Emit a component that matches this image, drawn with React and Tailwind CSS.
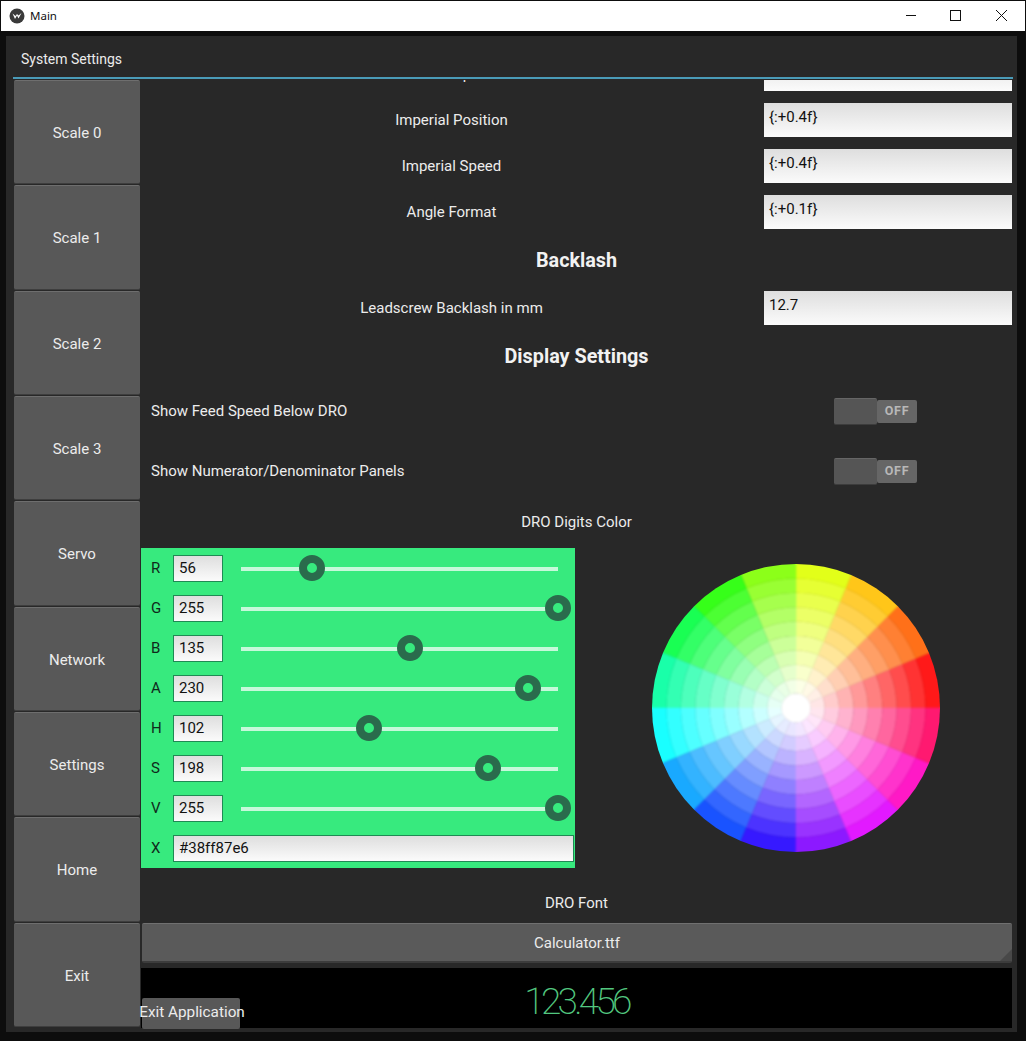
import React from "react";

const roboto = { fontFamily: "Roboto, sans-serif" };
const nav = ["Scale 0", "Scale 1", "Scale 2", "Scale 3", "Servo", "Network", "Settings", "Home", "Exit"];
const sliders = [["R", 56], ["G", 255], ["B", 135], ["A", 230], ["H", 102], ["S", 198], ["V", 255]];

function hsv(h, s) {
  const f = (n) => {
    const k = (n + h / 60) % 6;
    return Math.round(255 * (1 - s * Math.max(0, Math.min(k, 4 - k, 1))));
  };
  return `rgb(${f(5)},${f(3)},${f(1)})`;
}

function sector(r0, r1, a0, a1) {
  const p = (r, a) => [144 + r * Math.cos(a), 144 - r * Math.sin(a)].map((v) => v.toFixed(2)).join(" ");
  return `M${p(r0, a0)}L${p(r1, a0)}A${r1} ${r1} 0 0 0 ${p(r1, a1)}L${p(r0, a1)}A${r0} ${r0} 0 0 1 ${p(r0, a0)}Z`;
}

function Wheel() {
  const cells = [];
  for (let i = 0; i < 16; i++) {
    for (let j = 1; j < 10; j++) {
      const a0 = (i * Math.PI) / 8;
      const a1 = ((i + 1) * Math.PI) / 8;
      const c = hsv(i * 22.5, j / 10);
      const outer = j === 9 ? 156 : (j + 1) * 14.4;
      cells.push(<path key={`${i}-${j}`} d={sector(j * 14.4, outer, a0, a1)} fill={c} stroke={c} strokeWidth="0.5" />);
    }
  }
  return (
    <svg width="288" height="288" viewBox="0 0 288 288" className="block">
      <defs>
        <clipPath id="wheel-edge"><circle cx="144" cy="144" r="144" /></clipPath>
      </defs>
      <g clipPath="url(#wheel-edge)">
        <g className="blur-[0.9px]">
          {cells}
          <circle cx="144" cy="144" r="14.6" fill="#fff" />
        </g>
      </g>
    </svg>
  );
}

function Field({ value, className }) {
  return (
    <div className={`bg-gradient-to-b from-[#dedede] to-[#fbfbfb] text-[#111] text-[15px] leading-[17px] pl-[5px] overflow-hidden ${className}`}>
      {value}
    </div>
  );
}

function InputRow({ label, value, className = "" }) {
  return (
    <div className={`flex h-[34px] shrink-0 ${className}`}>
      <div className="w-[621px] flex items-center justify-center text-[15px] text-[#ececec]">{label}</div>
      <div className="w-[2px]" />
      <Field value={value} className="w-[248px] pt-[6px]" />
    </div>
  );
}

function Heading({ children }) {
  return <div className="h-[38px] shrink-0 pt-[2px] flex items-center justify-center text-[19.8px] font-bold text-[#f2f2f2]">{children}</div>;
}

function Toggle() {
  return (
    <div className="relative w-[83px] h-[27px] flex items-center">
      <div className="ml-[43px] w-[40px] h-[23px] pt-px rounded-[2px] bg-[#666] flex items-center justify-center text-[12.5px] font-bold tracking-[0.7px] text-[#b8b8b8]">OFF</div>
      <div className="absolute left-0 top-0 w-[43px] h-[27px] rounded-[2px] bg-[#555] border-t border-t-[#666] border-b border-b-[#3c3c3c]" />
    </div>
  );
}

function ToggleRow({ label }) {
  return (
    <div className="flex h-[48px] shrink-0 items-center">
      <div className="w-[693px] pl-[10px] text-[15px] text-[#ececec]">{label}</div>
      <Toggle />
    </div>
  );
}

function SliderRow({ name, value }) {
  const x = Math.min((value / 255) * 317 + 1, 317);
  return (
    <div className="flex h-[40px] items-center">
      <div className="w-[32px] pl-[10px] text-[15px] text-[#10291c]">{name}</div>
      <Field value={String(value)} className="w-[50px] h-[27px] border border-[#1f8a54] pt-[4px]" />
      <div className="relative ml-[18px] mt-[2px] w-[317px] h-[4px] bg-[#c6f9da]">
        <div className="absolute top-[-12px] w-[26px] h-[26px] rounded-full border-[8px] border-[#2a6b4c] bg-[#37ea7e]" style={{ left: x - 13 }} />
      </div>
    </div>
  );
}

function NavButton({ label }) {
  return (
    <div className="flex-1 pt-[2px] flex items-center justify-center rounded-[2px] bg-[#585858] border-t border-t-[#6e6e6e] border-b border-b-[#3e3e3e] text-[15px] text-[#ececec]">
      {label}
    </div>
  );
}

export default function App() {
  return (
    <div className="w-[1026px] h-[1041px] bg-[#0d0d0d] overflow-hidden flex flex-col pt-px pl-px pr-px" style={roboto}>
      <div className="h-[30px] shrink-0 bg-white flex items-center text-[#111]">
        <svg width="16" height="16" viewBox="0 0 16 16" className="ml-[8px]">
          <circle cx="8" cy="8" r="7.5" fill="#3a3a3a" />
          <path d="M3.5 5.5 L6 11 L8 7.5 L9.5 10.5 L12.5 5 L9.5 7.5 L8 6 L6.5 8 Z" fill="#fff" />
        </svg>
        <span className="ml-[5px] text-[11.5px]" style={{ fontFamily: "'Noto Sans', sans-serif" }}>Main</span>
        <svg width="120" height="30" viewBox="0 0 120 30" className="ml-auto mr-[5px]" fill="none" stroke="#111" strokeWidth="1">
          <path d="M6 14.5H16" />
          <rect x="50.5" y="9.5" width="10" height="10" />
          <path d="M96 9L107 20M107 9L96 20" />
        </svg>
      </div>

      <div className="ml-[5px] mt-[5px] w-[1011px] h-[996px] shrink-0 bg-[#282828] flex flex-col">
        <div className="h-[41px] shrink-0 flex items-end pl-[15px] pb-[7px] text-[14px] text-[#ececec]">System Settings</div>
        <div className="ml-[7px] w-[1000px] h-[2px] shrink-0 bg-[#4a9bb8]" />
        <div className="flex h-[949px] mt-px">
          <div className="ml-[8px] w-[126px] h-[947px] shrink-0 flex flex-col gap-px">
            {nav.map((n) => <NavButton key={n} label={n} />)}
          </div>
          <div className="ml-px w-[871px] flex flex-col">
            <div className="h-[888px] shrink-0 overflow-hidden">
              <div className="flex flex-col gap-3 -mt-[23px]">
                <InputRow label="Metric Speed" value="" />
                <InputRow label="Imperial Position" value="{:+0.4f}" />
                <InputRow label="Imperial Speed" value="{:+0.4f}" />
                <InputRow label="Angle Format" value="{:+0.1f}" />
                <Heading>Backlash</Heading>
                <InputRow label="Leadscrew Backlash in mm" value="12.7" />
                <Heading>Display Settings</Heading>
                <ToggleRow label="Show Feed Speed Below DRO" />
                <ToggleRow label="Show Numerator/Denominator Panels" />
                <div className="h-[29px] pt-[2px] flex items-center justify-center text-[15px] text-[#ececec]">DRO Digits Color</div>
                <div className="flex h-[320px] items-center">
                  <div className="w-[434px] h-[320px] bg-[#37ea7e]">
                    {sliders.map(([n, v]) => <SliderRow key={n} name={n} value={v} />)}
                    <div className="flex h-[40px] items-center">
                      <div className="w-[32px] pl-[10px] text-[15px] text-[#10291c]">X</div>
                      <Field value="#38ff87e6" className="w-[401px] h-[27px] border border-[#1f8a54] pt-[4px]" />
                    </div>
                  </div>
                  <div className="ml-[77px]"><Wheel /></div>
                </div>
                <div className="flex flex-col gap-[10px] pt-[13px]">
                  <div className="h-[20px] flex items-center justify-center text-[15px] text-[#ececec]">DRO Font</div>
                  <div className="relative ml-px h-[40px] pt-[2px] rounded-[2px] bg-[#5a5a5a] border-t border-t-[#707070] border-b-2 border-b-[#3c3c3c] flex items-center justify-center text-[15px] text-[#ececec]">
                    Calculator.ttf
                    <svg width="12" height="12" viewBox="0 0 12 12" className="absolute right-0 bottom-0"><path d="M12 0V12H0Z" fill="#484848" /></svg>
                  </div>
                </div>
              </div>
            </div>
            <div className="h-[60px] shrink-0 bg-black grid grid-cols-[100px_1fr_100px]">
              <div className="flex items-end pb-px">
                <div className="ml-px w-[98px] h-[31px] pb-[2px] pl-[2px] rounded-[2px] bg-[#585858] flex items-center justify-center whitespace-nowrap text-[15.3px] text-[#ececec]">Exit Application</div>
              </div>
              <div className="flex items-center justify-center pt-[6px] text-[37px] font-extralight tracking-[-3.7px] text-[#52c77f]">123.456</div>
              <div />
            </div>
          </div>
        </div>
      </div>
    </div>
  );
}
